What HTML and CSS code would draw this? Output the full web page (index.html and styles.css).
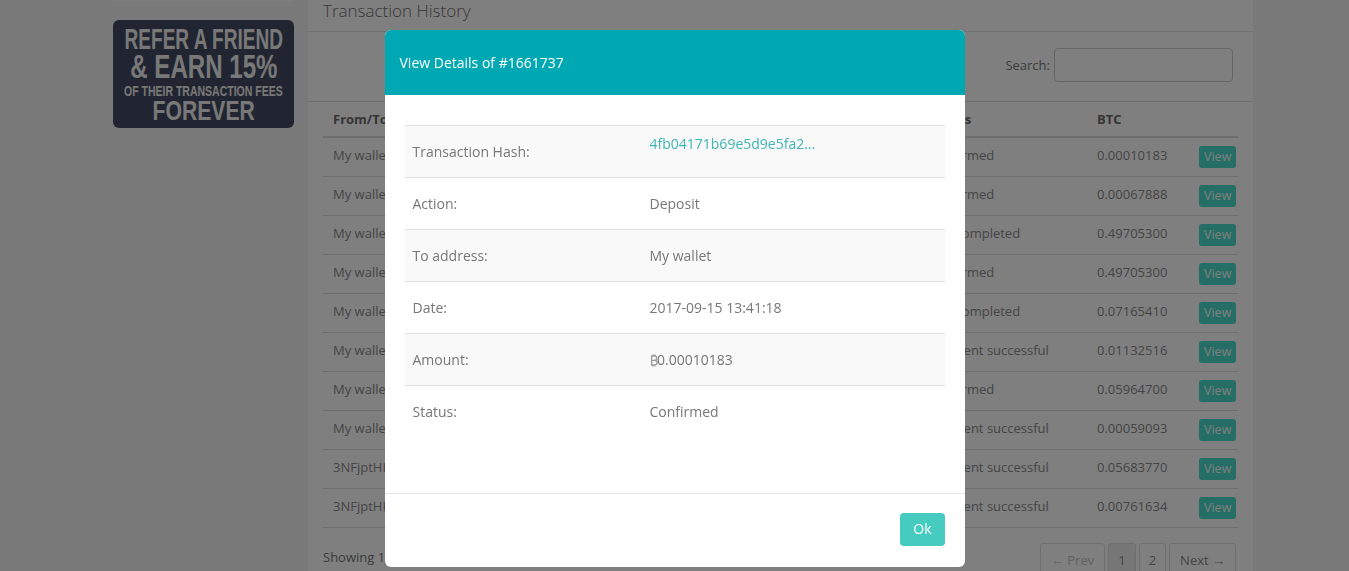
FILE: index.html
```html
<!DOCTYPE html>
<html lang="en">
<head>
<meta charset="utf-8">
<title>Transaction History</title>
<link rel="stylesheet" href="styles.css">
</head>
<body>
<div class="page">
  <aside class="sidebar">
    <div class="sidebar-strip"></div>
    <div class="banner">
      <div class="banner-line line1"><span>REFER A FRIEND</span></div>
      <div class="banner-line line2"><span>&amp; EARN 15%</span></div>
      <div class="banner-line line3"><span>OF THEIR TRANSACTION FEES</span></div>
      <div class="banner-line line4"><span>FOREVER</span></div>
    </div>
  </aside>
  <main class="panel">
    <div class="panel-title">Transaction History</div>
    <div class="search-row">
      <label class="search-label" for="q">Search:</label>
      <input class="search-input" id="q" type="text">
    </div>
    <table class="tx-table">
      <colgroup>
        <col class="c-from"><col class="c-date"><col class="c-status"><col class="c-btc"><col class="c-act">
      </colgroup>
      <thead>
        <tr><th>From/To</th><th>Date</th><th>Status</th><th>BTC</th><th></th></tr>
      </thead>
      <tbody>
        <tr><td>My wallet</td><td>2017-09-15 13:41:18</td><td>Confirmed</td><td>0.00010183</td><td class="act"><span class="view-btn">View</span></td></tr>
        <tr><td>My wallet</td><td>2017-09-14 10:12:40</td><td>Confirmed</td><td>0.00067888</td><td class="act"><span class="view-btn">View</span></td></tr>
        <tr><td>My wallet</td><td>2017-09-12 08:25:03</td><td>Not completed</td><td>0.49705300</td><td class="act"><span class="view-btn">View</span></td></tr>
        <tr><td>My wallet</td><td>2017-09-12 08:21:55</td><td>Confirmed</td><td>0.49705300</td><td class="act"><span class="view-btn">View</span></td></tr>
        <tr><td>My wallet</td><td>2017-09-10 19:02:11</td><td>Not completed</td><td>0.07165410</td><td class="act"><span class="view-btn">View</span></td></tr>
        <tr><td>My wallet</td><td>2017-09-08 16:44:27</td><td>Payment successful</td><td>0.01132516</td><td class="act"><span class="view-btn">View</span></td></tr>
        <tr><td>My wallet</td><td>2017-09-05 11:30:09</td><td>Confirmed</td><td>0.05964700</td><td class="act"><span class="view-btn">View</span></td></tr>
        <tr><td>My wallet</td><td>2017-09-03 09:17:52</td><td>Payment successful</td><td>0.00059093</td><td class="act"><span class="view-btn">View</span></td></tr>
        <tr><td>3NFjptHKq8v2Lw</td><td>2017-09-01 14:05:36</td><td>Payment successful</td><td>0.05683770</td><td class="act"><span class="view-btn">View</span></td></tr>
        <tr><td>3NFjptHKq8v2Lw</td><td>2017-08-30 12:48:20</td><td>Payment successful</td><td>0.00761634</td><td class="act"><span class="view-btn">View</span></td></tr>
      </tbody>
    </table>
    <div class="table-footer">
      <span class="showing">Showing 1 to 10 of 12 entries</span>
      <div class="pager">
        <span class="pg disabled">&larr; Prev</span>
        <span class="pg num active">1</span>
        <span class="pg num">2</span>
        <span class="pg">Next &rarr;</span>
      </div>
    </div>
  </main>
</div>

<div class="overlay">
  <div class="modal">
    <div class="modal-header">View Details of #1661737</div>
    <div class="modal-body">
      <table class="detail-table">
        <colgroup><col class="d-label"><col></colgroup>
        <tr class="odd"><td>Transaction Hash:</td><td class="top"><span class="hash">4fb04171b69e5d9e5fa2...</span></td></tr>
        <tr><td>Action:</td><td>Deposit</td></tr>
        <tr class="odd"><td>To address:</td><td>My wallet</td></tr>
        <tr><td>Date:</td><td>2017-09-15 13:41:18</td></tr>
        <tr class="odd"><td>Amount:</td><td><svg class="btc-icon" width="8" height="13" viewBox="0 0 8 13" aria-hidden="true"><path d="M1.6 2V11M1 2H4.7C6.1 2 6.7 2.9 6.7 4C6.7 5.2 5.9 6.3 4.6 6.3H1.6M4.6 6.3C6.4 6.3 7.2 7.4 7.2 8.6C7.2 10 6.3 11 4.7 11H1M3.1 0.4V2M5 0.4V2M3.1 11V12.6M5 11V12.6" fill="none" stroke="#9a9a9a" stroke-width="1.3"/></svg>0.00010183</td></tr>
        <tr><td>Status:</td><td>Confirmed</td></tr>
      </table>
    </div>
    <div class="modal-footer"><span class="ok-btn">Ok</span></div>
  </div>
</div>
</body>
</html>
```
FILE: styles.css
```css
html, body {
  margin: 0;
  height: 100%;
  overflow: hidden;
}
body {
  background: #f2f2f4;
  font-family: "Open Sans", "Liberation Sans", sans-serif;
  color: #777;
}
.page {
  display: flex;
  align-items: flex-start;
  padding-left: 113px;
  gap: 14px;
}
.sidebar {
  width: 181px;
  flex: none;
}
.sidebar-strip {
  height: 2px;
  background: #fbfbfb;
}
.banner {
  margin-top: 18px;
  height: 108px;
  box-sizing: border-box;
  padding-top: 8px;
  background: #424a62;
  border-radius: 6px;
  color: #f0f0f0;
  font-family: "Liberation Sans", Arial, sans-serif;
  font-weight: 700;
  overflow: hidden;
}
.banner-line {
  display: flex;
  justify-content: center;
  white-space: nowrap;
}
.banner-line span {
  display: inline-block;
  transform-origin: center center;
}
.line1 { font-size: 30px; line-height: 22px; }
.line1 span { transform: scaleX(0.635); }
.line2 { font-size: 33px; line-height: 24px; margin-top: 5px; }
.line2 span { transform: scaleX(0.73); }
.line3 { font-size: 15px; line-height: 11px; margin-top: 6px; }
.line3 span { transform: scaleX(0.70); }
.line4 { font-size: 28px; line-height: 20px; margin-top: 5px; }
.line4 span { transform: scaleX(0.755); }

.panel {
  width: 945px;
  flex: none;
  background: #fff;
  min-height: 700px;
}
.panel-title {
  height: 31px;
  padding: 0 15px;
  border-bottom: 1px solid #e3e3e3;
  font-size: 17px;
  line-height: 21px;
  font-weight: 300;
  color: #707070;
}
.search-row {
  height: 70px;
  box-sizing: border-box;
  display: flex;
  justify-content: flex-end;
  align-items: center;
  padding: 0 20px 4px;
  border-bottom: 1px solid #dcdcdc;
  font-size: 13px;
  color: #777;
}
.search-input {
  width: 179px;
  height: 34px;
  box-sizing: border-box;
  border: 1px solid #ccc;
  border-radius: 4px;
  margin-left: 4px;
  background: #fff;
}
.tx-table {
  margin: 0 15px;
  width: 915px;
  border-collapse: collapse;
  table-layout: fixed;
  font-size: 13px;
  color: #8a8a8a;
}
.c-from { width: 300px; }
.c-date { width: 297px; }
.c-status { width: 167px; }
.c-btc { width: 102px; }
.c-act { width: 49px; }
.tx-table th {
  text-align: left;
  padding: 8px 10px;
  line-height: 18px;
  border-bottom: 2px solid #dcdcdc;
  font-weight: 700;
  color: #6a6a6a;
}
.tx-table td {
  padding: 8px 10px 12px;
  line-height: 18px;
  vertical-align: top;
  border-top: 1px solid #dcdcdc;
  border-bottom: 1px solid #dcdcdc;
  white-space: nowrap;
  overflow: hidden;
}
.tx-table td.act {
  padding: 8px 0 8px 10px;
}
.view-btn {
  display: inline-block;
  padding: 2px 5px;
  line-height: 18px;
  font-size: 12.5px;
  background: #48dccb;
  color: #fff;
  border-radius: 3px;
}
.table-footer {
  display: flex;
  justify-content: space-between;
  align-items: flex-start;
  padding: 15px 17px 0 15px;
  font-size: 13px;
}
.showing {
  padding-top: 5px;
  line-height: 18px;
  color: #777;
}
.pager {
  display: flex;
  gap: 3px;
}
.pg {
  padding: 6px 10px;
  line-height: 20px;
  border: 1px solid #ddd;
  border-radius: 3px;
  color: #888;
  background: #fff;
}
.pg.num { padding: 6px 9px; }
.pg.disabled { color: #c4c4c4; }
.pg.active { background: #eee; color: #888; }

.overlay {
  position: fixed;
  inset: 0;
  background: rgba(0, 0, 0, 0.5);
  display: flex;
  justify-content: center;
  align-items: flex-start;
  padding-top: 30px;
}
.modal {
  width: 580px;
  background: #fff;
  border-radius: 6px;
  overflow: hidden;
}
.modal-header {
  height: 65px;
  box-sizing: border-box;
  padding: 0 15px;
  background: #00a8b4;
  color: #fff;
  display: flex;
  align-items: center;
  font-size: 14px;
}
.modal-body {
  padding: 30px 20px 55px;
}
.detail-table {
  width: 540px;
  border-collapse: collapse;
  table-layout: fixed;
  font-size: 14px;
  color: #777;
}
.d-label { width: 237px; }
.detail-table td {
  height: 52px;
  box-sizing: border-box;
  padding: 0 8px;
  line-height: 20px;
  border-top: 1px solid #e0e0e0;
  vertical-align: middle;
}
.detail-table tr.odd td { background: #f9f9f9; }
.detail-table td.top {
  vertical-align: top;
  padding-top: 8px;
}
.hash { color: #3fb5b5; }
.btc-icon {
  vertical-align: -2px;
  margin-right: -0.5px;
}
.modal-footer {
  border-top: 1px solid #e5e5e5;
  padding: 19px 20px 21px;
  display: flex;
  justify-content: flex-end;
}
.ok-btn {
  display: inline-block;
  padding: 6px 13px 7px;
  line-height: 20px;
  font-size: 14px;
  background: #45cbbf;
  color: #fff;
  border-radius: 4px;
}
```
